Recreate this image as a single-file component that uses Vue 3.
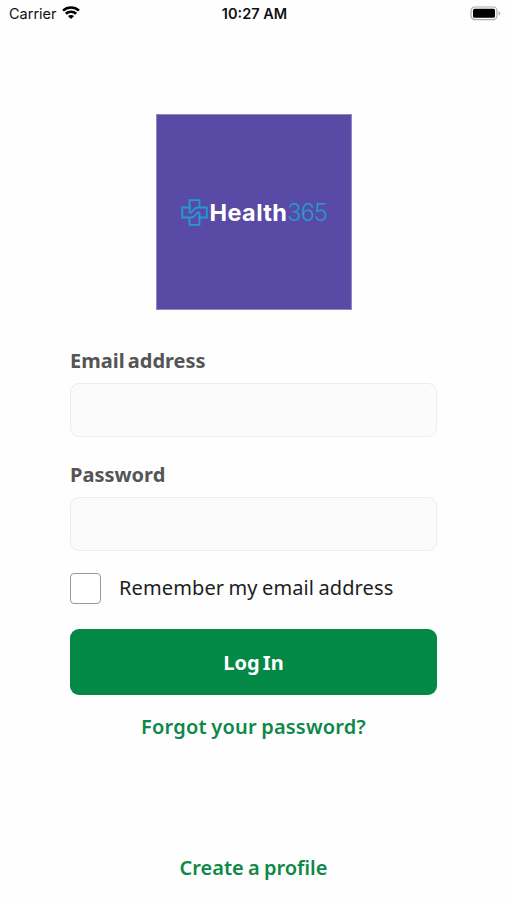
<template>
  <div class="login-page">
    <header class="status-bar">
      <div class="carrier">
        <span class="carrier-name">Carrier</span>
        <svg class="wifi" viewBox="0 0 18 13">
          <path d="M1 4.600C5.600.5 12.400.5 17 4.600" />
          <path d="M3.800 7.700c2.900-2.700 7.500-2.700 10.400 0" />
          <path class="dot" d="M9 13 5.900 10c1.700-1.500 4.500-1.500 6.200 0z" />
        </svg>
      </div>
      <div class="time">10:27 AM</div>
      <div class="battery-wrap">
        <svg class="battery" viewBox="0 0 31 15">
          <rect class="shell" x="1" y="1" width="26" height="12.6" rx="3.8" />
          <rect x="3" y="2.8" width="22" height="9" rx="1.5" />
          <path class="cap" d="M28.6 5.2c2.2.8 2.2 3.4 0 4.2z" />
        </svg>
      </div>
    </header>

    <div class="logo">
      <svg class="logo-mark" viewBox="0 0 27 27">
        <path d="M8.5 13.5V1.2h10v7.3h7.3v10H17" />
        <path d="M18.5 13.5v12.3h-10v-7.3H1.2v-10H10" />
        <path d="M8.5 18.5c3 .3 5-.9 6.4-3 1.2-1.7 2-2.6 3.600-2.900" />
        <path d="M18.5 8.500c-3-.3-5 .9-6.400 3-1.200 1.700-2 2.600-3.600 2.900" />
      </svg>
      <span class="logo-text">Health</span><span class="logo-number">365</span>
    </div>

    <form class="login-form" @submit.prevent="onLogin">
      <div v-for="field in fields" :key="field.id" class="field">
        <label :for="field.id">{{ field.label }}</label>
        <input :id="field.id" v-model="field.value" :type="field.type" />
      </div>
      <label class="remember">
        <input v-model="remember" type="checkbox" />
        <span class="box"></span>
        <span class="remember-text">Remember my email address</span>
      </label>
      <button type="submit">Log In</button>
    </form>

    <a class="link forgot">Forgot your password?</a>
    <a class="link create">Create a profile</a>
  </div>
</template>

<script setup>
import { reactive, ref } from 'vue'

const fields = reactive([
  { id: 'email', label: 'Email address', type: 'email', value: '' },
  { id: 'password', label: 'Password', type: 'password', value: '' }
])
const remember = ref(false)

function onLogin() {
  console.log('login', fields[0].value, remember.value)
}
</script>

<style>
body {
  background: #fefefe;
}
</style>

<style scoped>
.login-page {
  box-sizing: border-box;
  width: 507px;
  height: 900px;
  display: flex;
  flex-direction: column;
  align-items: center;
  overflow: hidden;
  background: #fefefe;
  font-family: "Noto Sans", sans-serif;
}

/* status bar */
.status-bar {
  box-sizing: border-box;
  width: 100%;
  height: 27px;
  padding: 0 6px 0 9px;
  display: grid;
  grid-template-columns: 1fr auto 1fr;
  align-items: center;
  color: #111;
  font-family: Inter, sans-serif;
  font-size: 14.5px;
}

.carrier {
  display: flex;
  align-items: center;
  gap: 5px;
}

.wifi {
  width: 18px;
  height: 13px;
  margin-top: -2px;
  fill: none;
  stroke: #000;
  stroke-width: 2.6;
}

.wifi .dot {
  fill: #000;
  stroke: none;
}

.time {
  padding-right: 1px;
  font-weight: 600;
}

.battery-wrap {
  display: flex;
  justify-content: flex-end;
}

.battery {
  width: 31px;
  height: 15px;
}

.shell {
  fill: none;
  stroke: #aaa;
  stroke-width: 1.2;
}

.cap {
  fill: #aaa;
}

/* logo */
.logo {
  box-sizing: border-box;
  width: 196px;
  height: 196px;
  margin-top: 87px;
  padding-left: 24px;
  display: flex;
  align-items: center;
  flex-shrink: 0;
  border: 1px solid #9287c6;
  background: #594aa5;
  font-family: Inter, sans-serif;
  font-size: 23.5px;
  line-height: 30px;
  white-space: nowrap;
}

.logo-mark {
  width: 27px;
  height: 27px;
  margin-right: 2px;
  flex-shrink: 0;
  fill: none;
  stroke: #229bd3;
  stroke-width: 1.8;
}

.logo-text,
.logo-number {
  padding-top: 2px;
}

.logo-text {
  color: #fff;
  font-weight: 700;
  letter-spacing: 0.4px;
}

.logo-number {
  color: #229bd3;
  font-weight: 300;
  letter-spacing: -0.8px;
}

/* form */
.login-form {
  width: 367px;
  margin-top: 36px;
  display: flex;
  flex-direction: column;
}

.field {
  height: 114px;
}

.field + .field {
  height: 113px;
}

.field label {
  display: block;
  height: 37px;
  line-height: 30px;
  color: #555;
  font-size: 20px;
  font-weight: 700;
  word-spacing: -2px;
}

.field input {
  box-sizing: border-box;
  display: block;
  width: 100%;
  height: 54px;
  padding: 0 14px;
  border: 1px solid #ededed;
  border-radius: 9px;
  outline: none;
  background: #fbfbfb;
  font-size: 20px;
}

.remember {
  height: 31px;
  display: flex;
  align-items: center;
  gap: 18px;
  color: #1d1d1d;
  font-size: 20px;
}

.remember input {
  display: none;
}

.remember-text {
  margin-top: -2px;
  letter-spacing: 0.12px;
  word-spacing: -1px;
}

.box {
  box-sizing: border-box;
  width: 31px;
  height: 31px;
  border: 1px solid #999;
  border-radius: 4px;
  background: #fff;
}

.remember input:checked + .box {
  background: #048845;
}

button {
  height: 66px;
  margin-top: 25px;
  padding: 0;
  border: 0;
  border-radius: 9px;
  background: #048845;
  color: #fff;
  font-family: inherit;
  font-size: 20px;
  font-weight: 700;
  word-spacing: -2px;
}

.link {
  color: #0d8848;
  font-size: 20px;
  font-weight: 600;
  line-height: 28px;
}

.forgot {
  margin-top: 18px;
  letter-spacing: 0.2px;
  word-spacing: -1px;
}

.create {
  margin-top: 113px;
  word-spacing: -1px;
}
</style>
